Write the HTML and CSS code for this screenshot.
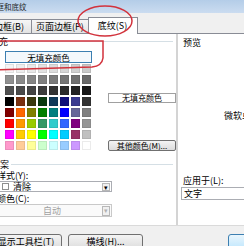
FILE: index.html
```html
<!DOCTYPE html>
<html>
<head>
    <meta charset="utf-8" />
    <title>边框和底纹</title>
    <link rel="stylesheet" href="styles.css">
</head>
<body>
    <div class="dialog">
        <!-- 标题栏 -->
        <div class="titlebar">边框和底纹</div>
        <!-- 选项卡 -->
        <div class="tabs">
            <div class="tab first">边框(B)</div>
            <div class="tab">页面边框(P)</div>
            <div class="tab on">底纹(S)</div>
        </div>
        <div class="page">
            <div class="left">
                <div class="group">填充</div>
                <div class="nofill">无填充颜色</div>
                <div class="fill">
                    <div class="palette"></div>
                    <div class="side">
                        <div class="current">无填充颜色</div>
                        <div class="btn more">其他颜色(M)...</div>
                    </div>
                </div>
                <div class="group pattern">图案</div>
                <div class="label">样式(Y):</div>
                <div class="select">
                    <span class="check"></span>
                    <span class="val">清除</span>
                    <span class="arrow">▾</span>
                </div>
                <div class="label">颜色(C):</div>
                <div class="select off">
                    <span class="val">自动</span>
                    <span class="arrow">▾</span>
                </div>
            </div>
            <div class="right">
                <div class="caption">预览</div>
                <div class="sample">微软卓越 AaBbCc</div>
                <div class="caption apply">应用于(L):</div>
                <div class="select target"><span class="val">文字</span></div>
            </div>
        </div>
        <div class="footer">
            <div class="btn tools">显示工具栏(T)</div>
            <div class="btn line">横线(H)...</div>
            <div class="btn ok">确定</div>
        </div>
    </div>
    <!-- 红色标注 -->
    <svg class="marks" width="244" height="246" viewBox="0 0 244 246">
        <ellipse cx="105" cy="21" rx="27" ry="15" />
        <path d="M-5 41 L103 41 L103 58 Q102 66 92 67 L-5 70" />
    </svg>
    <script type="text/javascript">
        // 调色板颜色, 每行8个
        var colors = [
            '#f4f4f4','#eeeeee','#e8e8e8','#e2e2e2','#dcdcdc','#d6d6d6','#d0d0d0','#cacaca',
            '#909090','#8a8a8a','#858585','#808080','#7a7a7a','#757575','#707070','#6a6a6a',
            '#505050','#4a4a4a','#444444','#3c3c3c','#333333','#2a2a2a','#222222','#181818',
            '#000000','#7a3010','#3a3a10','#0a3a10','#103a5a','#10107a','#3a3a90','#333333',
            '#800000','#ff6600','#808000','#008000','#008080','#0000ff','#666699','#808080',
            '#ff0000','#ff9900','#99cc00','#339966','#33cccc','#3366ff','#800080','#969696',
            '#ff00ff','#ffcc00','#ffff00','#00ff00','#00ffff','#00ccff','#993366','#c0c0c0',
            '#ff99cc','#ffcc99','#ffff99','#ccffcc','#ccffff','#99ccff','#cc99ff','#ffffff'
        ];
        var palette = document.querySelector('.palette');
        for (var i = 0; i < colors.length; i++) {
            var cell = document.createElement('div');
            cell.className = 'cell';
            cell.style.background = colors[i];
            palette.appendChild(cell);
        }
    </script>
</body>
</html>
```

FILE: styles.css
```css
/*页面*/
body{
    margin: 0;
    width: 244px;
    height: 246px;
    overflow: hidden;
    position: relative;
    background: #f0f0f0;
    font-family: "Noto Sans CJK SC", "Liberation Sans", sans-serif;
    font-size: 9px;
    color: #000;
}
.dialog{
    margin-left: -12px;
    width: 300px;
}
/*标题栏*/
.titlebar{
    height: 13px;
    line-height: 13px;
    padding-left: 1px;
    font-size: 7.5px;
    color: #1e1e1e;
    background: linear-gradient(#b4cde8, #cbdcf0);
}
/*选项卡*/
.tabs{
    height: 20px;
    display: flex;
    align-items: flex-end;
    padding-left: 1px;
}
.tab{
    height: 14px;
    line-height: 13px;
    padding: 0 4px;
    border: 1px solid #898c95;
    border-bottom: none;
    margin-right: -1px;
    background: linear-gradient(#f6f6f6, #e3e3e3);
    box-sizing: border-box;
}
.tab.first{
    padding: 0 7px 0 4px;
}
.tab.on{
    height: 17px;
    line-height: 15px;
    padding: 0 10px 0 9px;
    margin-bottom: -1px;
    background: #fff;
    position: relative;
}
/*内容区*/
.page{
    height: 193px;
    display: flex;
    background: #fff;
    border-top: 1px solid #898c95;
    border-bottom: 1px solid #dadada;
    box-sizing: border-box;
}
.left{
    width: 197px;
    padding-left: 2px;
    box-sizing: border-box;
}
.group{
    display: flex;
    align-items: center;
    height: 9px;
    line-height: 9px;
    margin-top: 3px;
}
.group::after{
    content: "";
    flex: 1;
    border-top: 1px solid #d5dfe5;
    margin: 0 3px 0 2px;
}
.group.pattern{
    margin-top: 9px;
    margin-left: 1px;
}
.nofill{
    margin: 5px 0 0 15px;
    width: 87px;
    height: 12px;
    line-height: 10px;
    border: 1px solid #3c7fb1;
    background: #f3f8fc;
    box-sizing: border-box;
    text-align: center;
    font-size: 8.5px;
}
.fill{
    display: flex;
    margin: 1px 0 0 15px;
}
.palette{
    display: grid;
    grid-template-columns: repeat(8, 9px);
    grid-auto-rows: 9px;
    gap: 2px;
}
.cell{
    box-shadow: inset 0 0 0 1px rgba(0,0,0,0.08);
}
.side{
    width: 68px;
    margin-left: 17px;
    padding-top: 29px;
}
.current{
    height: 10px;
    line-height: 8px;
    font-size: 8px;
    text-align: center;
    border: 1px solid #a0a0a0;
    background: #fff;
    box-sizing: border-box;
}
.btn{
    height: 16px;
    line-height: 14px;
    text-align: center;
    border: 1px solid #707070;
    border-radius: 3px;
    background: linear-gradient(#f4f4f4, #dcdcdc);
    box-sizing: border-box;
    white-space: nowrap;
    overflow: hidden;
}
.btn.more{
    margin-top: 37px;
    height: 11px;
    line-height: 9px;
    font-size: 8px;
    border-radius: 2px;
}
.label{
    margin: 2px 0 0 7px;
    height: 9px;
    line-height: 9px;
}
.label + .select{
    margin-top: 1px;
}
/*下拉框*/
.select{
    display: flex;
    align-items: center;
    margin-left: 6px;
    width: 116px;
    height: 11px;
    border: 1px solid #abadb3;
    background: #fff;
    box-sizing: border-box;
}
.check{
    width: 7px;
    height: 7px;
    margin-left: 5px;
    border: 1px solid #8e8f8f;
    box-sizing: border-box;
}
.val{
    margin-left: 4px;
    line-height: 9px;
}
.arrow{
    margin-left: auto;
    margin-right: 1px;
    width: 8px;
    height: 8px;
    line-height: 7px;
    font-size: 7px;
    text-align: center;
    border: 1px solid #b8b8b8;
    background: #f0f0f0;
    box-sizing: border-box;
}
.select.off{
    height: 13px;
    color: #a0a0a0;
    background: #fafafa;
    border-color: #c9c9c9;
}
.select.off .val{
    margin-left: 46px;
}
.select.off .arrow{
    height: 10px;
    color: #b0b0b0;
}
/*预览*/
.right{
    flex: 1;
    border-left: 2px solid #d4d4d4;
    padding-left: 5px;
}
.caption{
    margin-top: 4px;
    height: 9px;
    line-height: 9px;
}
.sample{
    margin: 64px 0 0 41px;
    line-height: 9px;
    white-space: nowrap;
}
.caption.apply{
    margin-top: 56px;
}
.select.target{
    margin: 2px 0 0 -2px;
    width: 80px;
    height: 13px;
}
.select.target .val{
    margin-left: 2px;
}
/*底部按钮*/
.footer{
    display: flex;
    padding: 8px 0 0 2px;
}
.btn.tools{
    width: 72px;
}
.btn.line{
    width: 75px;
    margin-left: 6px;
}
.btn.ok{
    width: 60px;
    margin-left: 85px;
    border-color: #3c7fb1;
    background: linear-gradient(#eaf6fd, #bee6fd);
}
/*红色标注*/
.marks{
    position: absolute;
    left: 0;
    top: 0;
    fill: none;
    stroke: #d2323c;
    stroke-width: 1.5;
}
```
